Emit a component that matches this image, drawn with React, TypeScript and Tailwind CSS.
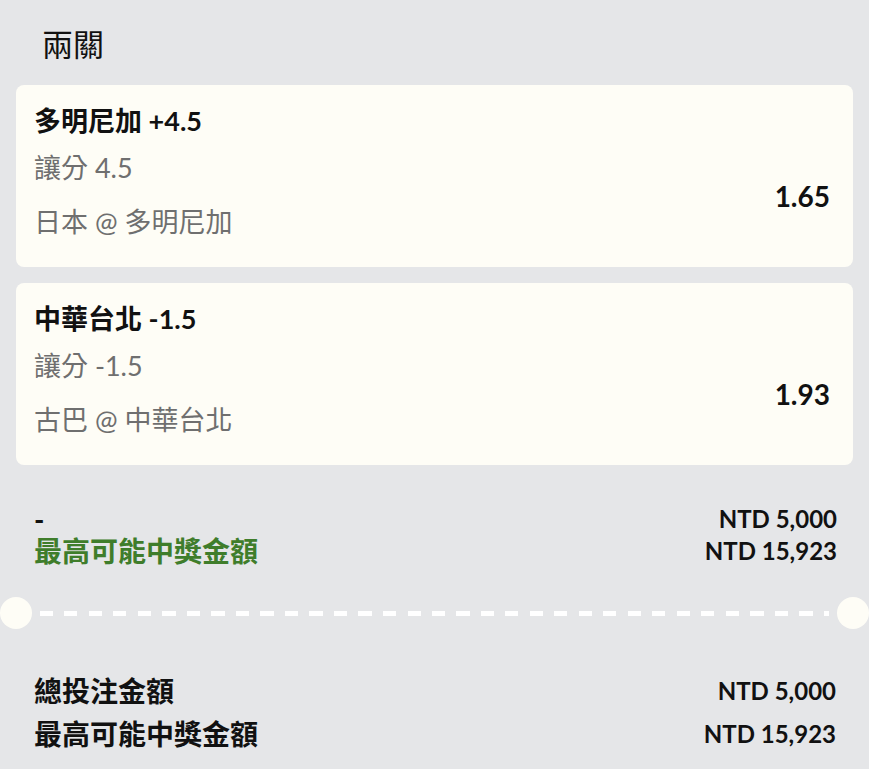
const latin = "font-['Lato','Noto_Sans_CJK_TC',sans-serif]";

type Leg = { pick: string; market: string; match: string; odds: string };

const legs: Leg[] = [
  { pick: "多明尼加 +4.5", market: "讓分 4.5", match: "日本 @ 多明尼加", odds: "1.65" },
  { pick: "中華台北 -1.5", market: "讓分 -1.5", match: "古巴 @ 中華台北", odds: "1.93" },
];

function LegCard({ leg }: { leg: Leg }) {
  return (
    <div className="flex items-start justify-between rounded-lg bg-[#fefdf6] pl-[18px] pr-[23px] pt-[18px] h-[182px]">
      <div className="flex flex-col">
        <div className="text-[27px] leading-[36px] font-bold text-[#111]">{leg.pick}</div>
        <div className="mt-[11px] text-[27px] leading-[36px] text-[#6f6f6f]">{leg.market}</div>
        <div className="mt-[18px] text-[27px] leading-[36px] text-[#6f6f6f]">{leg.match}</div>
      </div>
      <div className="mt-[75px] text-[28px] leading-[36px] font-bold text-[#111]">{leg.odds}</div>
    </div>
  );
}

function Row({ label, value, labelClass }: { label: string; value: string; labelClass?: string }) {
  return (
    <div className="flex items-center justify-between h-[32px]">
      <span className={`text-[28px] font-bold ${labelClass ?? "text-[#111]"}`}>{label}</span>
      <span className="text-[24px] font-bold text-[#111]">{value}</span>
    </div>
  );
}

export default function App() {
  return (
    <div className={`min-h-[769px] w-[869px] bg-[#e5e6e8] ${latin}`}>
      <div className="px-[16px] pt-[24px]">
        <h2 className="pl-[26px] text-[31px] leading-[40px] text-[#111]">兩關</h2>
        <div className="mt-[21px] flex flex-col gap-[16px]">
          {legs.map((l) => (
            <LegCard key={l.pick} leg={l} />
          ))}
        </div>
        <div className="mt-[38px] pl-[18px] pr-[16px] flex flex-col">
          <Row label="-" value="NTD 5,000" />
          <Row label="最高可能中獎金額" value="NTD 15,923" labelClass="text-[#3f7d2b]" />
        </div>
      </div>

      <div className="mt-[30px] flex items-center">
        <div className="h-[32px] w-[32px] shrink-0 rounded-full bg-[#fefdf6]" />
        <div className="mx-[8px] h-[5px] flex-1 bg-[repeating-linear-gradient(90deg,#ffffff_0_13px,transparent_13px_24.5px)]" />
        <div className="h-[32px] w-[32px] shrink-0 rounded-full bg-[#fefdf6]" />
      </div>

      <div className="mt-[46px] pl-[34px] pr-[33px] flex flex-col gap-[11px]">
        <Row label="總投注金額" value="NTD 5,000" />
        <Row label="最高可能中獎金額" value="NTD 15,923" />
      </div>
    </div>
  );
}
